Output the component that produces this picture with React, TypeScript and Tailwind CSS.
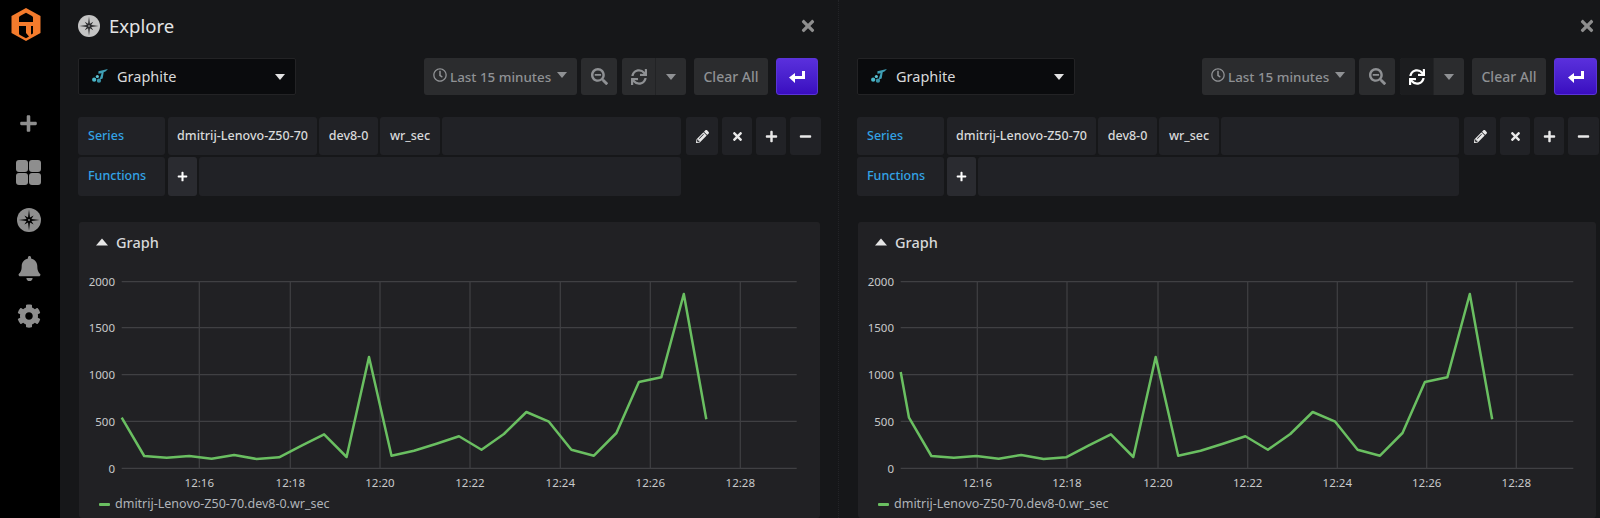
import { FaBell, FaCog, FaMinus, FaPencilAlt, FaPlus, FaRegClock, FaSearchMinus, FaSync, FaTimes } from "react-icons/fa";

const SERIES_Y = [473, 588, 593, 588, 596, 585, 597, 592, 557, 523, 591, 291, 587, 572, 551, 529, 569, 522, 456, 485, 569, 587, 519, 366, 352, 102, 478];
const GRID_Y = [
  { y: 59.7, label: "2000" },
  { y: 105.7, label: "1500" },
  { y: 152.7, label: "1000" },
  { y: 199.3, label: "500" },
  { y: 246.3, label: "0" },
];
const TICK_LABELS = ["12:16", "12:18", "12:20", "12:22", "12:24", "12:26", "12:28"];

// 8 pointed star: long points on the axes, short ones on the diagonals
const STAR = Array.from({ length: 16 }, (_, i) => {
  const r = i % 2 === 1 ? 2.6 : i % 4 === 0 ? 10.5 : 6.5;
  const a = (i * Math.PI) / 8;
  return `${(12 + r * Math.sin(a)).toFixed(2)},${(12 - r * Math.cos(a)).toFixed(2)}`;
}).join(" ");

function Caret({ className }: { className?: string }) {
  return (
    <svg width="10" height="6" viewBox="0 0 10 6" className={className}>
      <path d="M0 0h10L5 6z" fill="currentColor" />
    </svg>
  );
}

function Compass({ size, disc, star }: { size: number; disc: string; star: string }) {
  return (
    <svg width={size} height={size} viewBox="0 0 24 24">
      <circle cx="12" cy="12" r="12" fill={disc} />
      <polygon points={STAR} fill={star} />
      <circle cx="12" cy="12" r="0.900" fill={disc} />
    </svg>
  );
}

function Logo() {
  return (
    <svg width="30" height="33" viewBox="0 0 30 33">
      <path d="M15 0l14.500 8v17L15 33 .5 25V8z" fill="#f47b2c" />
      <path d="M8 9.500Q8 8.500 9 8l6-3.200L21 8q1 .5 1 1.500V14H8zM8 18h7v7l3 3.500-3 1.700-6-3.300q-1-.5-1-1.500zM20 18h2v7.500l-2 1z" fill="#000" />
    </svg>
  );
}

function GraphiteIcon() {
  return (
    <svg width="18" height="15" viewBox="0 0 17 14">
      <path d="M7 2l9-2-2 2-2 1-1 6-3 1 2-6-3 .5z" fill="#3f9fb5" />
      <circle cx="3" cy="10" r="2" fill="#4bb8c9" />
      <circle cx="7.500" cy="11" r="2" fill="#3a94a8" />
      <circle cx="6" cy="7" r="1.500" fill="#5cc3d4" />
    </svg>
  );
}

function ReturnIcon() {
  return (
    <svg width="16" height="12" viewBox="0 0 16 12">
      <path d="M13 0h3v8H6v4L0 6.500 6 2v3h7z" fill="#fff" />
    </svg>
  );
}

function GraphPanel({ ticks, start, step, lead, width, axisEnd }: { ticks: number[]; start: number; step: number; lead?: number[]; width: number; axisEnd: number }) {
  const pts = SERIES_Y.map((v, i) => `${(start + i * step).toFixed(1)},${(38 + v / 3).toFixed(1)}`);
  if (lead) pts.unshift(`${lead[0]},${lead[1]}`);

  return (
    <svg width={width} height="296" className="absolute left-0 top-0">
      {GRID_Y.map((g) => (
        <g key={g.label}>
          <line x1="42.7" x2={axisEnd} y1={g.y} y2={g.y} stroke="#404043" strokeWidth="1.2" />
          <text x="36" y={g.y + 4.2} textAnchor="end" fontSize="11.500" fill="#c8c9ca">{g.label}</text>
        </g>
      ))}
      {ticks.map((x, i) => (
        <g key={x}>
          <line x1={x} x2={x} y1="59.7" y2="246.3" stroke="#404043" strokeWidth="1.2" />
          <text x={x} y="265" textAnchor="middle" fontSize="11.500" fill="#c8c9ca">{TICK_LABELS[i]}</text>
        </g>
      ))}
      <polyline points={pts.join(" ")} fill="none" stroke="#6abf61" strokeWidth="2.500" strokeLinejoin="round" />
    </svg>
  );
}

function Pane({ second, panelClass, paneClass, chart }: { second?: boolean; panelClass: string; paneClass: string; chart: React.ReactNode }) {
  return (
    <div className={paneClass}>
      <div className="flex h-[58px] w-[739px] items-center pb-[6px]">
        {!second && (
          <>
            <Compass size={22} disc="#c4c4c4" star="#2a2a2c" />
            <span className="ml-[9px] text-[18.500px] text-[#e3e4e5]">Explore</span>
          </>
        )}
        <FaTimes className="ml-auto text-[18px] text-[#8e8e8e]" />
      </div>

      <div className="flex h-[37px]">
        <div className="flex w-[218px] items-center rounded-[2px] border border-[#232325] bg-[#0a0b0d] pl-[12px] pr-[10px]">
          <GraphiteIcon />
          <span className="ml-[8px] mt-[1px] text-[14.500px] text-[#d8d9da]">Graphite</span>
          <Caret className="ml-auto text-[#e3e3e3]" />
        </div>

        <div className={second ? "ml-[127px] flex w-[153px] items-center rounded-[3px] bg-[#2b2c2e] pl-[9px] text-[#8f9194]" : "ml-[128px] flex w-[153px] items-center rounded-[3px] bg-[#2b2c2e] pl-[9px] text-[#8f9194]"}>
          <FaRegClock className="mb-[3px] text-[14px]" />
          <span className="ml-[3px] mt-[1px] text-[13.400px] font-medium">Last 15 minutes</span>
          <Caret className="mb-[3px] ml-[6px]" />
        </div>
        <div className="ml-[4px] flex w-[36px] items-center justify-center rounded-[3px] bg-[#2b2c2e] text-[#8f9194]">
          <FaSearchMinus className="text-[17px]" />
        </div>
        <div className="ml-[5px] flex w-[64px] overflow-hidden rounded-[3px] bg-[#2b2c2e] text-[#8f9194]">
          <div className={second ? "flex w-[34px] items-center justify-center border-r border-[#222325] bg-[#1c1d1f] text-white" : "flex w-[34px] items-center justify-center border-r border-[#222325]"}>
            <FaSync className="text-[16px]" />
          </div>
          <div className="flex flex-1 items-center justify-center">
            <Caret />
          </div>
        </div>
        <div className="ml-[8px] flex w-[74px] items-center justify-center rounded-[3px] bg-[#2b2c2e] text-[14px] font-medium text-[#8f9194]">
          Clear All
        </div>
        <div className={second ? "ml-[8px] flex w-[43px] items-center justify-center rounded-[3px] border border-[#5a34d6] bg-gradient-to-b from-[#5a2fdc] to-[#3a0cc0]" : "ml-[8px] flex w-[42px] items-center justify-center rounded-[3px] border border-[#5a34d6] bg-gradient-to-b from-[#5a2fdc] to-[#3a0cc0]"}>
          <ReturnIcon />
        </div>
      </div>

      <div className="mt-[22px] flex">
        <div className={second ? "w-[602px] text-[12.500px] font-medium text-[#d8d9da]" : "w-[603px] text-[12.500px] font-medium text-[#d8d9da]"}>
          <div className="flex h-[38px] gap-[2px]">
            <div className="mr-[1px] flex w-[87px] items-center rounded-[3px] bg-[#212226] pl-[10px] text-[#33a2e5]">Series</div>
            <div className="flex w-[149px] items-center justify-center rounded-[3px] bg-[#212226]">dmitrij-Lenovo-Z50-70</div>
            <div className="flex w-[59px] items-center justify-center rounded-[3px] bg-[#212226]">dev8-0</div>
            <div className="flex w-[60px] items-center justify-center rounded-[3px] bg-[#212226]">wr_sec</div>
            <div className="flex-1 rounded-[3px] bg-[#212226]" />
          </div>
          <div className="mt-[2px] flex h-[39px] gap-[2px]">
            <div className="mr-[1px] flex w-[87px] items-center rounded-[3px] bg-[#212226] pl-[10px] text-[#33a2e5]">Functions</div>
            <div className="flex w-[29px] items-center justify-center rounded-[3px] bg-[#2a2b30] text-white">
              <FaPlus className="text-[11px]" />
            </div>
            <div className="flex-1 rounded-[3px] bg-[#212226]" />
          </div>
        </div>
        <div className="ml-[5px] flex h-[38px] gap-[4px] text-[#e9e9e9]">
          <div className="flex w-[32px] items-center justify-center rounded-[3px] bg-[#212226]"><FaPencilAlt className="text-[13px]" /></div>
          <div className="flex w-[30px] items-center justify-center rounded-[3px] bg-[#212226]"><FaTimes className="text-[13px]" /></div>
          <div className="flex w-[30px] items-center justify-center rounded-[3px] bg-[#212226]"><FaPlus className="text-[13px]" /></div>
          <div className="flex w-[31px] items-center justify-center rounded-[3px] bg-[#212226]"><FaMinus className="text-[13px]" /></div>
        </div>
      </div>

      <div className={panelClass}>
        {chart}
        <div className="absolute left-[17px] top-[10px] flex items-center">
          <Caret className="h-[8px] w-[12px] rotate-180 text-[#e6e6e6]" />
          <span className="ml-[8px] text-[14.500px] font-medium leading-[20px] text-[#d8d9da]">Graph</span>
        </div>
        <div className="absolute left-[20px] top-[272px] flex items-center">
          <span className="h-[3px] w-[11px] rounded-[1px] bg-[#6abf61]" />
          <span className="ml-[5px] text-[12.500px] leading-[20px] text-[#b0b4b9]">dmitrij-Lenovo-Z50-70.dev8-0.wr_sec</span>
        </div>
      </div>
    </div>
  );
}

export default function App() {
  return (
    <div className="flex h-[518px] w-[1600px] overflow-hidden bg-[#161719] font-['Roboto',sans-serif]">
      <aside className="relative h-full w-[60px] shrink-0 bg-black text-[#8e8e8e]">
        <div className="absolute left-[11px] top-[8px]"><Logo /></div>
        <FaPlus className="absolute left-[19px] top-[114px] text-[19px]" />
        <div className="absolute left-[16px] top-[160px] grid h-[25px] w-[25px] grid-cols-2 gap-[1.500px]">
          <span className="rounded-[3px] bg-[#8e8e8e]" />
          <span className="rounded-[3px] bg-[#8e8e8e]" />
          <span className="rounded-[3px] bg-[#8e8e8e]" />
          <span className="rounded-[3px] bg-[#8e8e8e]" />
        </div>
        <div className="absolute left-[17px] top-[208px]"><Compass size={24} disc="#8e8e8e" star="#000" /></div>
        <FaBell className="absolute left-[17px] top-[256px] text-[25px]" />
        <FaCog className="absolute left-[17px] top-[304px] text-[24px]" />
      </aside>

      <Pane
        paneClass="h-full w-[778px] shrink-0 bg-[#161719] pl-[18px]"
        panelClass="relative ml-[1px] mt-[26px] h-[296px] w-[741px] rounded-[3px] bg-[#212124]"
        chart={<GraphPanel width={741} start={42.7} step={22.485} axisEnd={717.7} ticks={[120.3, 211.3, 301, 391, 481.3, 571.3, 661.3]} />}
      />
      <Pane
        second
        paneClass="h-full w-[762px] shrink-0 border-l border-dotted border-[#232427] bg-[#161719] pl-[18px]"
        panelClass="relative ml-[1px] mt-[26px] h-[296px] w-[738px] rounded-[3px] bg-[#212124]"
        chart={<GraphPanel width={738} start={51} step={22.43} lead={[42.7, 150]} axisEnd={715.3} ticks={[119.3, 209, 300, 389.7, 479.3, 568.7, 658.3]} />}
      />
    </div>
  );
}
